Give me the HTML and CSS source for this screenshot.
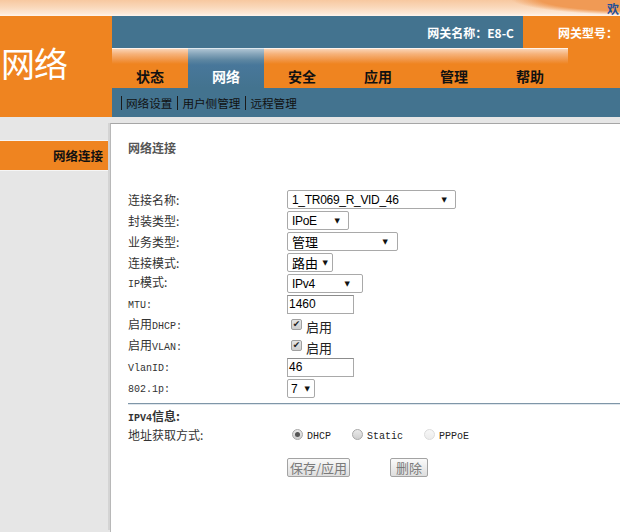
FILE: index.html
```html
<!DOCTYPE html>
<html>
<head>
<meta charset="utf-8">
<link rel="stylesheet" href="styles.css">
</head>
<body>
<div class="page">
  <div class="topband"><span class="welcome">欢</span></div>
  <div class="header">
    <div class="logo">网络</div>
    <div class="head-right">
      <div class="info-row">
        <div class="gw-name">网关名称：E8-C</div>
        <div class="gw-type">网关型号：</div>
      </div>
      <div class="tabs">
        <div class="tab">状态</div>
        <div class="tab active">网络</div>
        <div class="tab">安全</div>
        <div class="tab">应用</div>
        <div class="tab">管理</div>
        <div class="tab">帮助</div>
      </div>
      <div class="subnav">
        <span class="sub-item">网络设置</span><span class="sub-item">用户侧管理</span><span class="sub-item">远程管理</span>
      </div>
    </div>
  </div>
  <div class="main">
    <div class="sidebar">
      <div class="menu-item">网络连接</div>
    </div>
    <div class="panel">
      <div class="panel-title">网络连接</div>
      <div class="form">
        <div class="label">连接名称:</div>
        <div class="ctrl"><div class="select w169"><span>1_TR069_R_VID_46</span><span class="arrow">▼</span></div></div>

        <div class="label">封装类型:</div>
        <div class="ctrl"><div class="select w62"><span>IPoE</span><span class="arrow">▼</span></div></div>

        <div class="label">业务类型:</div>
        <div class="ctrl"><div class="select w111"><span class="cjk">管理</span><span class="arrow">▼</span></div></div>

        <div class="label">连接模式:</div>
        <div class="ctrl"><div class="select w46"><span class="cjk">路由</span><span class="arrow">▼</span></div></div>

        <div class="label"><span class="lat">IP</span>模式:</div>
        <div class="ctrl"><div class="select w76"><span>IPv4</span><span class="arrow">▼</span></div></div>

        <div class="label"><span class="lat">MTU:</span></div>
        <div class="ctrl"><div class="input">1460</div></div>

        <div class="label">启用<span class="lat">DHCP:</span></div>
        <div class="ctrl"><div class="check-wrap"><span class="checkbox">✔</span><span class="check-text">启用</span></div></div>

        <div class="label">启用<span class="lat">VLAN:</span></div>
        <div class="ctrl"><div class="check-wrap"><span class="checkbox">✔</span><span class="check-text">启用</span></div></div>

        <div class="label"><span class="lat">VlanID:</span></div>
        <div class="ctrl"><div class="input">46</div></div>

        <div class="label"><span class="lat">802.1p:</span></div>
        <div class="ctrl"><div class="select w28"><span>7</span><span class="arrow">▼</span></div></div>
      </div>
      <div class="divider"></div>
      <div class="form2">
        <div class="label bold"><span class="lat">IPV4</span>信息:</div>
        <div></div>
        <div class="label">地址获取方式:</div>
        <div class="radios">
          <span class="radio checked"></span><span class="radio-text">DHCP</span>
          <span class="radio"></span><span class="radio-text">Static</span>
          <span class="radio faded"></span><span class="radio-text">PPPoE</span>
        </div>
      </div>
      <div class="buttons">
        <div class="btn w63">保存/应用</div>
        <div class="btn w38">删除</div>
      </div>
    </div>
  </div>
</div>
</body>
</html>
```

FILE: styles.css
```css
html, body {
  margin: 0;
  padding: 0;
}
body {
  width: 620px;
  height: 532px;
  overflow: hidden;
  background: #e6e6e6;
  font-family: "Noto Sans CJK SC", "Liberation Sans", sans-serif;
  font-size: 12px;
  color: #222;
}
.page {
  width: 620px;
  height: 532px;
  display: flex;
  flex-direction: column;
  overflow: hidden;
}
.topband {
  height: 16px;
  flex: none;
  box-sizing: border-box;
  padding-left: 607px;
  white-space: nowrap;
  overflow: hidden;
  background:
    radial-gradient(ellipse 130px 17px at 640px -2px, #f09a55 0 78%, rgba(240,154,85,0) 100%),
    linear-gradient(to bottom, #f7c8a0 0%, #fad8ba 45%, #fde9d8 85%, #fff6ee 100%);
}
.welcome {
  color: #1f4f9a;
  font-weight: bold;
  font-size: 12px;
  line-height: 16px;
}
.header {
  display: flex;
  height: 101px;
  flex: none;
}
.logo {
  width: 112px;
  background: #ef8420;
  color: #fff;
  font-size: 34px;
  line-height: 1;
  padding-top: 30px;
  padding-left: 1px;
  box-sizing: border-box;
  letter-spacing: -1px;
}
.head-right {
  flex: 1;
  display: flex;
  flex-direction: column;
}
.info-row {
  height: 32px;
  display: flex;
}
.gw-name {
  flex: 1;
  background: #43738f;
  color: #fff;
  font-weight: bold;
  text-align: right;
  padding-right: 9px;
  line-height: 34px;
}
.gw-type {
  width: 97px;
  background: #ef8420;
  color: #fff;
  font-weight: bold;
  padding-left: 35px;
  box-sizing: border-box;
  line-height: 34px;
  white-space: nowrap;
}
.tabs {
  height: 40px;
  display: flex;
  background: #ef8420;
}
.tab {
  width: 76px;
  box-sizing: border-box;
  border-top: 1px solid #fff3ea;
  background: linear-gradient(to bottom, #fad4b6 0px, #f6b27a 5px, #f19545 11px, #ef8420 15px, #ef8420 100%);
  text-align: center;
  font-weight: bold;
  font-size: 14px;
  color: #111;
  padding-top: 17px;
  line-height: 20px;
}
.tab.active {
  color: #fff;
  border-top-color: #dde8ef;
  background: linear-gradient(to bottom, #aec4d3 0px, #86a5ba 5px, #5d86a1 11px, #48779a 16px, #43738f 100%);
}
.subnav {
  height: 29px;
  background: #43738f;
  display: flex;
  align-items: center;
  padding-left: 9px;
  font-size: 11.6px;
  color: #111;
}
.sub-item {
  border-left: 1px solid #1a1a1a;
  padding-left: 4px;
  margin-right: 5px;
  line-height: 14px;
}
.main {
  flex: 1;
  display: flex;
  min-height: 0;
}
.sidebar {
  width: 110px;
  flex: none;
  padding-top: 23px;
}
.menu-item {
  height: 29px;
  background: #ef8420;
  border-top: 1px solid #f6f6f6;
  border-bottom: 1px solid #f6f6f6;
  text-align: right;
  padding-right: 8px;
  font-weight: bold;
  font-size: 12.5px;
  line-height: 29px;
  color: #111;
  margin-right: -1px;
}
.panel {
  flex: 1;
  margin-top: 6px;
  background: #fff;
  border-top: 1px solid #a6a6a6;
  border-left: 1px solid #b8b8b8;
  padding-left: 17px;
  padding-top: 16px;
  box-shadow: -3px -1px 0 -1px #d4d4d4;
}
.panel-title {
  font-weight: bold;
  color: #555;
  font-size: 12px;
  line-height: 16px;
}
.form {
  margin-top: 33px;
  display: grid;
  grid-template-columns: 159px auto;
  grid-auto-rows: 21px;
  align-items: center;
}
.label {
  color: #333;
  font-size: 12px;
  line-height: 14px;
  white-space: nowrap;
}
.lat {
  font-family: "Liberation Mono", monospace;
  font-size: 10px;
}
.label.bold {
  font-weight: bold;
}
.ctrl {
  display: flex;
  align-items: center;
}
.select {
  height: 19px;
  box-sizing: border-box;
  border: 1px solid #a9a9a9;
  border-radius: 2px;
  background: #fff;
  display: flex;
  align-items: center;
  justify-content: space-between;
  padding-left: 4px;
  padding-right: 6px;
  font-family: "Liberation Sans", "Noto Sans CJK SC", sans-serif;
  font-size: 12px;
  letter-spacing: -0.3px;
  color: #000;
  white-space: nowrap;
}
.select .cjk {
  font-family: "Noto Sans CJK SC", sans-serif;
  font-size: 13px;
  letter-spacing: 0;
}
.arrow {
  font-family: "DejaVu Sans", sans-serif;
  font-size: 7px;
  letter-spacing: 0;
  color: #111;
}
.w169 { width: 169px; padding-right: 8px; }
.w62 { width: 62px; padding-right: 8px; }
.w111 { width: 111px; padding-right: 9px; }
.w46 { width: 46px; padding-right: 4px; }
.w76 { width: 76px; padding-right: 12px; }
.w28 { width: 28px; padding-left: 3px; padding-right: 4px; }
.input {
  width: 67px;
  height: 19px;
  box-sizing: border-box;
  border: 1px solid #a9a9a9;
  border-top-color: #8c8c8c;
  padding-left: 1px;
  font-family: "Liberation Sans", sans-serif;
  font-size: 12px;
  line-height: 17px;
  color: #000;
}
.check-wrap {
  display: flex;
  align-items: center;
  padding-left: 4px;
}
.checkbox {
  width: 11px;
  height: 11px;
  box-sizing: border-box;
  border: 1px solid #a0a0a0;
  border-radius: 2px;
  background: linear-gradient(#e4e4e4, #cfcfcf);
  font-family: "DejaVu Sans", sans-serif;
  font-size: 9px;
  line-height: 9px;
  text-align: center;
  color: #222;
  margin-top: -3px;
}
.check-text {
  margin-left: 4px;
  font-size: 13px;
  line-height: 14px;
  color: #222;
  margin-top: 3px;
}
.divider {
  margin-top: 4px;
  height: 1px;
  background: #7f96a8;
  border-bottom: 1px solid #dfe6ec;
}
.form2 {
  margin-top: 4px;
  display: grid;
  grid-template-columns: 164px auto;
  grid-auto-rows: 17px;
  align-items: center;
}
.radios {
  display: flex;
  align-items: center;
}
.radio {
  width: 11px;
  height: 11px;
  box-sizing: border-box;
  border-radius: 50%;
  border: 1px solid #a8a8a8;
  background: linear-gradient(#e9e9e9, #cfcfcf);
  display: flex;
  align-items: center;
  justify-content: center;
}
.radio.checked::after {
  content: "";
  width: 5px;
  height: 5px;
  border-radius: 50%;
  background: #555;
}
.radio.faded {
  border-color: #dcdcdc;
  background: linear-gradient(#f7f7f7, #ececec);
}
.radio-text {
  font-family: "Liberation Mono", monospace;
  font-size: 10px;
  margin-left: 4px;
  margin-right: 21px;
  color: #222;
  padding-top: 3px;
}
.buttons {
  margin-top: 15px;
  padding-left: 159px;
  display: flex;
  gap: 40px;
}
.btn {
  height: 19px;
  box-sizing: border-box;
  border: 1px solid #a3a3a3;
  border-radius: 2px;
  background: linear-gradient(#fafafa, #dedede);
  color: #7a7a7a;
  font-size: 13px;
  line-height: 17px;
  text-align: center;
  white-space: nowrap;
}
.w63 { width: 63px; }
.w38 { width: 38px; }
```
